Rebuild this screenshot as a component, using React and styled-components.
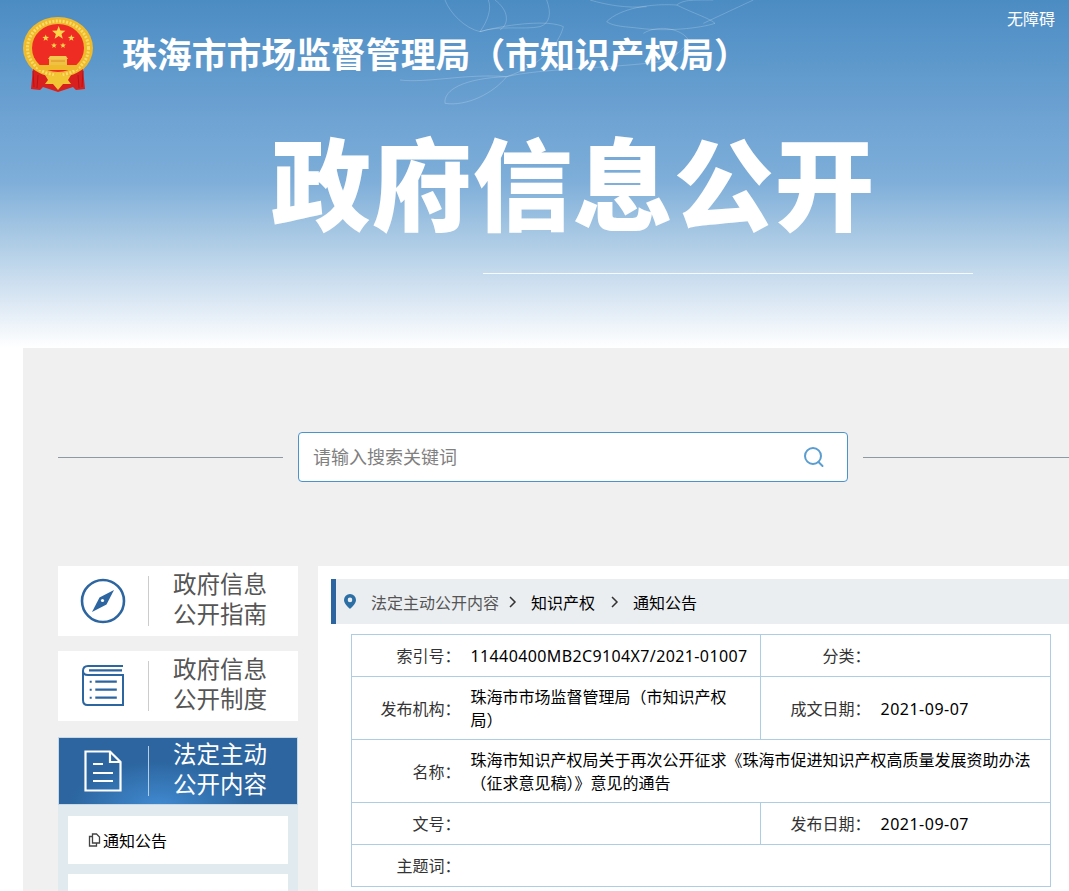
import React from 'react';
import styled, { createGlobalStyle } from 'styled-components';

const GlobalStyle = createGlobalStyle`
  html, body {
    margin: 0;
    padding: 0;
    background: #fff;
    overflow: hidden;
  }
  body {
    font-family: "Noto Sans", "Noto Sans CJK SC", "Liberation Sans", sans-serif;
    color: #000;
  }
`;

const Page = styled.div`
  height: 891px;
  overflow: hidden;
`;

const Header = styled.header`
  position: relative;
  height: 348px;
  background: linear-gradient(180deg, #4b8cc3 0%, #6ea3d3 34%, #7eaed9 52%, #a9c9e4 68%, #dfeaf5 88%, #fff 100%);
  box-sizing: border-box;
  overflow: hidden;
`;

const Flowers = styled.svg`
  position: absolute;
  left: 400px;
  top: 0;
  width: 669px;
  height: 120px;
`;

const TopRow = styled.div`
  position: relative;
  display: flex;
  align-items: flex-start;
  padding: 17px 14px 0 22px;
`;

const Brand = styled.h1`
  margin: 15px 0 0 28px;
  font-size: 34.85px;
  line-height: 46px;
  font-weight: 700;
  color: #fff;
  white-space: nowrap;
`;

const AccessLink = styled.a`
  position: absolute;
  right: 14px;
  top: 8px;
  font-size: 16px;
  line-height: 22px;
  color: #fff;
`;

const BigTitle = styled.div`
  position: relative;
  margin: 32px 0 0 271px;
  font-size: 100px;
  line-height: 118px;
  letter-spacing: 0.7px;
  font-weight: 900;
  color: #fff;
  white-space: nowrap;
`;

const TitleRule = styled.div`
  position: relative;
  width: 490px;
  height: 1px;
  margin: 30px 0 0 483px;
  background: rgba(255, 255, 255, 0.85);
`;

const Main = styled.main`
  margin-left: 23px;
  padding: 84px 0 0 35px;
  background: #f0f0f0;
  height: 543px;
  box-sizing: border-box;
`;

const SearchRow = styled.div`
  display: flex;
  align-items: center;
  gap: 15px;
  margin-bottom: 84px;
`;

const SearchLine = styled.div`
  height: 1px;
  background: #8d9aa5;
  flex: ${({ $grow }) => ($grow ? 1 : '0 0 225px')};
`;

const SearchBox = styled.div`
  flex: 0 0 550px;
  height: 50px;
  box-sizing: border-box;
  display: flex;
  align-items: center;
  justify-content: space-between;
  padding: 0 22px 0 14px;
  background: #fff;
  border: 1px solid #4a94cc;
  border-radius: 4px;
`;

const SearchInput = styled.input`
  flex: 1;
  border: 0;
  outline: 0;
  padding: 0;
  background: transparent;
  font: inherit;
  font-size: 18px;
  color: #333;
  &::placeholder {
    color: #808080;
    opacity: 1;
  }
`;

const Columns = styled.div`
  display: flex;
  align-items: flex-start;
  gap: 20px;
`;

const Sidebar = styled.nav`
  flex: 0 0 240px;
  display: flex;
  flex-direction: column;
`;

const NavCard = styled.div`
  display: flex;
  align-items: center;
  height: ${({ $active }) => ($active ? '68px' : '70px')};
  margin-bottom: ${({ $active }) => ($active ? '0' : '15px')};
  margin-top: ${({ $active }) => ($active ? '1px' : '0')};
  box-sizing: border-box;
  color: ${({ $active }) => ($active ? '#fff' : '#555')};
  background: ${({ $active }) =>
    $active ? 'radial-gradient(ellipse 90px 44px at 42% 100%, #4089cf 0%, #2c659f 100%)' : '#fff'};
  box-shadow: ${({ $active }) => ($active ? 'inset 0 0 0 1px #c6d9e5' : 'none')};
`;

const NavIcon = styled.div`
  flex: 0 0 90px;
  display: flex;
  justify-content: center;
  align-items: center;
`;

const NavDivider = styled.div`
  flex: 0 0 1px;
  height: 50px;
  background: ${({ $active }) => ($active ? '#b9cde0' : '#ccc')};
  margin-right: 24px;
`;

const NavText = styled.div`
  font-size: 23.5px;
  line-height: 30px;
  padding-bottom: 4px;
`;

const SubMenu = styled.div`
  background: #e0eaef;
  padding: 11px 10px;
  display: flex;
  flex-direction: column;
  gap: 10px;
`;

const SubItem = styled.a`
  height: 48px;
  background: #fff;
  display: flex;
  align-items: center;
  gap: 2px;
  padding-left: 20px;
  font-size: 16px;
  color: #000;
`;

const Content = styled.section`
  flex: 1;
  min-width: 0;
  background: #fff;
  padding: 13px 0 0 13px;
  height: 325px;
`;

const Crumbs = styled.div`
  display: flex;
  align-items: center;
  height: 45px;
  padding-left: 8px;
  background: #ebeef1;
  border-left: 5px solid #2c659f;
  font-size: 16px;
`;

const CrumbMuted = styled.span`
  color: #555;
  margin-left: 15px;
`;

const CrumbLink = styled.span`
  color: #000;
`;

const CrumbArrow = styled.svg`
  width: 10px;
  height: 12px;
  margin: 0 ${({ $right }) => $right}px 0 ${({ $left }) => $left}px;
`;

const InfoTable = styled.table`
  width: 699px;
  margin: 10px 0 0 20px;
  border-collapse: collapse;
  table-layout: fixed;
  border: 1px solid #aecde3;
  font-size: 16px;
  line-height: 23px;
`;

const Row = styled.tr`
  height: ${({ $tall }) => ($tall ? '63px' : '42px')};
  border-bottom: 1px solid #aecde3;
`;

const Label = styled.td`
  padding: 2px 0 0;
  text-align: right;
  vertical-align: middle;
  color: #333;
`;

const Value = styled.td`
  padding: 2px 10px 0;
  vertical-align: middle;
  color: #000;
  letter-spacing: ${({ $num }) => ($num ? `${$num}px` : '0')};
  border-right: ${({ $split }) => ($split ? '1px solid #aecde3' : '0')};
`;

const starPoints = (cx, cy, r) => {
  const pts = [];
  for (let i = 0; i < 10; i++) {
    const rad = i % 2 ? r * 0.42 : r;
    const a = (Math.PI / 5) * i - Math.PI / 2;
    pts.push(`${(cx + rad * Math.cos(a)).toFixed(2)},${(cy + rad * Math.sin(a)).toFixed(2)}`);
  }
  return pts.join(' ');
};

const Emblem = () => (
  <svg width="72" height="76" viewBox="0 0 72 76">
    <ellipse cx="36" cy="31" rx="35" ry="31" fill="#efbb2c" />
    <ellipse cx="36" cy="31" rx="30.500" ry="27" fill="none" stroke="#f9dc6a" strokeWidth="3" strokeDasharray="2 1.500" />
    <ellipse cx="36" cy="31" rx="26" ry="24" fill="#ee2c24" />
    <polygon points={starPoints(36.700, 16, 7)} fill="#ffd84a" />
    <polygon points={starPoints(23.700, 21, 3.500)} fill="#ffd84a" />
    <polygon points={starPoints(49.300, 21, 3.500)} fill="#ffd84a" />
    <polygon points={starPoints(32, 28.500, 3)} fill="#ffd84a" />
    <polygon points={starPoints(41, 28.500, 3)} fill="#ffd84a" />
    <path d="M28 39h16l2 3H26z" fill="#f3c94e" />
    <path d="M27 42h18v6H27z" fill="#f0c244" />
    <path d="M29 44h14" stroke="#d9801f" strokeWidth="0.800" />
    <path d="M14 48h44l-3 5H17z" fill="#efbb2c" />
    <path d="M11 52c8 6 16 8 25 8s17-2 25-8l2 20-9 1-3-3-15 5-15-5-3 3-9-1z" fill="#d8201f" />
    <path d="M11 54l1 16M16 58l-1 13M56 58l1 13M61 54l-1 16" stroke="#b5141a" strokeWidth="1" fill="none" />
    <path d="M36 55l5 4 8-1-3 5 3 4-8 0-5 6-5-6-8 0 3-4-3-5 8 1z" fill="#f2c534" />
  </svg>
);

const CompassIcon = () => (
  <svg width="46" height="46" viewBox="0 0 46 46">
    <circle cx="23" cy="23" r="21" fill="none" stroke="#2c659f" strokeWidth="2.600" />
    <path d="M34 12 L26.500 26.500 L12 34 L19.500 19.500 Z" fill="#2c659f" />
    <circle cx="22.500" cy="22.500" r="1.600" fill="#fff" />
  </svg>
);

const BookIcon = () => (
  <svg width="44" height="44" viewBox="0 0 44 44" fill="none" stroke="#2c659f">
    <path d="M42 2H7C3.500 2 2 4 2 7V36c0 3 1.500 5 4.500 5H42V11H7C4 11 2 9.500 2 7" strokeWidth="2" />
    <path d="M8 6.400h33" strokeWidth="2.200" />
    <path d="M14.300 17.700h21.500M14.300 25.700h21.500M14.300 33.700h21.500" strokeWidth="2.200" />
    <path d="M8.700 17.700h2M8.700 25.700h2M8.700 33.700h2" strokeWidth="2" />
  </svg>
);

const DocIcon = () => (
  <svg width="38" height="42" viewBox="0 0 38 42" fill="none" stroke="#fff" strokeWidth="2.200">
    <path d="M1.500 1.500H26L36.500 12V40.500H1.500Z" />
    <path d="M26 1.500V12H36.500" />
    <path d="M9 14h10M9 23h20M9 31h20" />
  </svg>
);

const SearchIcon = () => (
  <svg width="22" height="22" viewBox="0 0 22 22" fill="none" stroke="#5a9dd0" strokeWidth="2">
    <circle cx="10" cy="10" r="8" />
    <path d="M15.500 16l4 4" strokeLinecap="round" />
  </svg>
);

const PinIcon = () => (
  <svg width="12" height="15" viewBox="0 0 12 15">
    <path fillRule="evenodd" d="M6 0a6 6 0 0 1 6 6c0 3.500-3.600 6.800-6 9-2.400-2.200-6-5.500-6-9a6 6 0 0 1 6-6zm0 3.600a2.300 2.300 0 1 0 0 4.600 2.300 2.300 0 0 0 0-4.600z" fill="#2c6fa5" />
  </svg>
);

const CopyIcon = () => (
  <svg width="13" height="14" viewBox="0 0 13 14" fill="none" stroke="#444" strokeWidth="1.300">
    <path d="M4.500 1h4l3 3v6h-7z" />
    <path d="M4.500 3.500H1.500V13h7v-3" />
  </svg>
);

const Arrow = ({ left, right }) => (
  <CrumbArrow $left={left} $right={right} viewBox="0 0 10 12" fill="none" stroke="#333" strokeWidth="1.500">
    <path d="M3 1l5 5-5 5" />
  </CrumbArrow>
);

const App = () => (
  <Page>
    <GlobalStyle />
    <Header>
      <Flowers viewBox="0 0 2007 360" fill="none" stroke="rgba(255,255,255,0.2)" strokeWidth="3">
        <path d="M135 0C150 40 195 85 240 95C265 60 275 25 265 0" />
        <path d="M285 0C325 30 330 70 300 90M240 95C300 75 370 90 420 80C450 70 455 40 440 0" />
        <path d="M240 95C330 70 450 60 490 80C480 120 440 190 320 230" />
        <path d="M135 310C130 270 190 235 320 230C280 280 200 320 135 310Z" />
        <path d="M0 240C80 250 200 220 320 230C420 205 640 205 780 185" />
        <path d="M620 65C660 25 750 10 830 15C880 40 930 55 945 70C900 85 800 95 720 85C680 80 640 80 620 65Z" />
        <path d="M730 100C780 70 850 90 865 120C850 160 800 180 780 185M570 0C620 15 680 25 740 20" />
        <path d="M910 70L1060 0M830 15C850 0 870 0 940 0" />
      </Flowers>
      <TopRow>
        <Emblem />
        <Brand>珠海市市场监督管理局（市知识产权局）</Brand>
        <AccessLink>无障碍</AccessLink>
      </TopRow>
      <BigTitle>政府信息公开</BigTitle>
      <TitleRule />
    </Header>
    <Main>
      <SearchRow>
        <SearchLine />
        <SearchBox>
          <SearchInput placeholder="请输入搜索关键词" />
          <SearchIcon />
        </SearchBox>
        <SearchLine $grow />
      </SearchRow>
      <Columns>
        <Sidebar>
          <NavCard>
            <NavIcon><CompassIcon /></NavIcon>
            <NavDivider />
            <NavText>政府信息<br />公开指南</NavText>
          </NavCard>
          <NavCard>
            <NavIcon><BookIcon /></NavIcon>
            <NavDivider />
            <NavText>政府信息<br />公开制度</NavText>
          </NavCard>
          <NavCard $active>
            <NavIcon><DocIcon /></NavIcon>
            <NavDivider $active />
            <NavText>法定主动<br />公开内容</NavText>
          </NavCard>
          <SubMenu>
            <SubItem><CopyIcon />通知公告</SubItem>
            <SubItem />
          </SubMenu>
        </Sidebar>
        <Content>
          <Crumbs>
            <PinIcon />
            <CrumbMuted>法定主动公开内容</CrumbMuted>
            <Arrow left={8} right={14} />
            <CrumbLink>知识产权</CrumbLink>
            <Arrow left={14} right={14} />
            <CrumbLink>通知公告</CrumbLink>
          </Crumbs>
          <InfoTable>
            <colgroup>
              <col width="109" />
              <col width="300" />
              <col width="110" />
              <col width="180" />
            </colgroup>
            <tbody>
              <Row>
                <Label>索引号：</Label>
                <Value $split $num={0.38}>11440400MB2C9104X7/2021-01007</Value>
                <Label>分类：</Label>
                <Value />
              </Row>
              <Row $tall>
                <Label>发布机构：</Label>
                <Value $split>珠海市市场监督管理局（市知识产权局）</Value>
                <Label>成文日期：</Label>
                <Value $num={0.5}>2021-09-07</Value>
              </Row>
              <Row $tall>
                <Label>名称：</Label>
                <Value colSpan={3}>珠海市知识产权局关于再次公开征求《珠海市促进知识产权高质量发展资助办法（征求意见稿）》意见的通告</Value>
              </Row>
              <Row>
                <Label>文号：</Label>
                <Value $split />
                <Label>发布日期：</Label>
                <Value $num={0.5}>2021-09-07</Value>
              </Row>
              <Row>
                <Label>主题词：</Label>
                <Value colSpan={3} />
              </Row>
            </tbody>
          </InfoTable>
        </Content>
      </Columns>
    </Main>
  </Page>
);

export default App;
